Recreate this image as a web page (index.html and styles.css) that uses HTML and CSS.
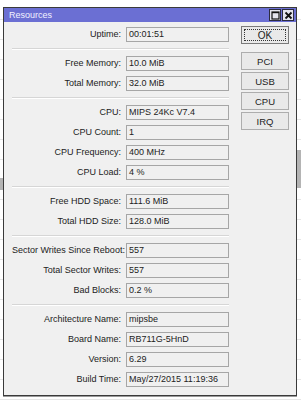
FILE: index.html
```html
<!DOCTYPE html>
<html lang="en">
<head>
    <meta charset="UTF-8">
    <meta name="viewport" content="width=device-width, initial-scale=1.0">
    <title>Resources</title>
    <link rel="stylesheet" href="styles.css">
</head>
<body>
    <div class="window">
        <div class="titlebar">
            <span class="title">Resources</span>
            <div class="controls">
                <span class="ctl">
                    <svg width="9" height="9" viewBox="0 0 9 9"><rect x="1" y="1" width="7" height="7" fill="none" stroke="#111" stroke-width="1.2"/><line x1="1" y1="1.6" x2="8" y2="1.6" stroke="#111" stroke-width="1.2"/></svg>
                </span>
                <span class="ctl">
                    <svg width="9" height="9" viewBox="0 0 9 9"><path d="M1.5 1.5 L7.5 7.5 M7.5 1.5 L1.5 7.5" stroke="#111" stroke-width="1.8"/></svg>
                </span>
            </div>
        </div>

        <div class="content">
            <div class="form">
                <div class="row"><label>Uptime:</label><div class="field">00:01:51</div></div>
                <div class="sep"></div>
                <div class="row"><label>Free Memory:</label><div class="field">10.0 MiB</div></div>
                <div class="row"><label>Total Memory:</label><div class="field">32.0 MiB</div></div>
                <div class="sep"></div>
                <div class="row"><label>CPU:</label><div class="field">MIPS 24Kc V7.4</div></div>
                <div class="row"><label>CPU Count:</label><div class="field">1</div></div>
                <div class="row"><label>CPU Frequency:</label><div class="field">400 MHz</div></div>
                <div class="row"><label>CPU Load:</label><div class="field">4 %</div></div>
                <div class="sep"></div>
                <div class="row"><label>Free HDD Space:</label><div class="field">111.6 MiB</div></div>
                <div class="row"><label>Total HDD Size:</label><div class="field">128.0 MiB</div></div>
                <div class="sep"></div>
                <div class="row"><label>Sector Writes Since Reboot:</label><div class="field">557</div></div>
                <div class="row"><label>Total Sector Writes:</label><div class="field">557</div></div>
                <div class="row"><label>Bad Blocks:</label><div class="field">0.2 %</div></div>
                <div class="sep"></div>
                <div class="row"><label>Architecture Name:</label><div class="field">mipsbe</div></div>
                <div class="row"><label>Board Name:</label><div class="field">RB711G-5HnD</div></div>
                <div class="row"><label>Version:</label><div class="field">6.29</div></div>
                <div class="row"><label>Build Time:</label><div class="field">May/27/2015 11:19:36</div></div>
            </div>

            <div class="buttons">
                <button type="button" class="btn ok"><span>OK</span></button>
                <button type="button" class="btn first">PCI</button>
                <button type="button" class="btn">USB</button>
                <button type="button" class="btn">CPU</button>
                <button type="button" class="btn">IRQ</button>
            </div>
        </div>
    </div>
</body>
</html>
```
FILE: styles.css
```css
body {
    margin: 0;
    width: 301px;
    height: 400px;
    overflow: hidden;
    font-family: "Liberation Sans", Arial, sans-serif;
    font-size: 9px;
    color: #222;
    background-color: #fff;
    background-image:
        linear-gradient(#b4b4b4, #b4b4b4),
        linear-gradient(#b4b4b4, #b4b4b4),
        repeating-linear-gradient(#fff 0, #fff 19px, #e6e6e6 19px, #e6e6e6 20px);
    background-size: 4px 12px, 6px 38px, 100% 100%;
    background-position: 0 178px, 296px 150px, 0 0;
    background-repeat: no-repeat;
}

.window {
    margin: 7px 0 0 3px;
    width: 292px;
    height: 387px;
    border: 1px solid #3a3a3a;
    background: #f0f0f0;
    box-shadow: 0 1px 0 #9a9a9a;
}

.titlebar {
    height: 14px;
    display: flex;
    align-items: center;
    justify-content: space-between;
    background: #6b6fd3;
    color: #f2f2ff;
    padding-left: 5px;
}

.controls {
    display: flex;
    gap: 1px;
    padding-right: 2px;
}

.ctl {
    width: 10px;
    height: 10px;
    display: flex;
    align-items: center;
    justify-content: center;
    background: #e4e4ee;
    border: 1px solid #2c2c40;
}

.content {
    display: flex;
    padding-top: 2px;
}

.form {
    width: 225px;
}

.row {
    display: grid;
    grid-template-columns: 109px 103px;
    column-gap: 5px;
    height: 20px;
    align-items: center;
    padding-left: 8px;
}

.row label {
    text-align: right;
    white-space: nowrap;
}

.field {
    height: 13px;
    line-height: 13px;
    border: 1px solid #a6a6a6;
    background: #f0f0f0;
    padding-left: 2px;
    white-space: nowrap;
    overflow: hidden;
}

.sep {
    height: 4px;
    margin: 0 0 4px 8px;
    border-bottom: 1px solid #d6d6d6;
    box-shadow: 0 1px 0 #fff;
}

.buttons {
    display: flex;
    flex-direction: column;
    gap: 2px;
    margin-left: 12px;
    padding-top: 2px;
}

.btn {
    width: 48px;
    height: 18px;
    padding: 0;
    border: 1px solid #adadad;
    background: #e9e9e9;
    font-family: "Liberation Sans", Arial, sans-serif;
    font-size: 9.5px;
    color: #222;
}

.btn.first {
    margin-top: 6px;
}

.ok {
    border-color: #7a7a7a;
    padding: 2px;
}

.ok span {
    display: block;
    height: 100%;
    line-height: 12px;
    border: 1px dotted #333;
    box-sizing: border-box;
    font-size: 10px;
}
```
